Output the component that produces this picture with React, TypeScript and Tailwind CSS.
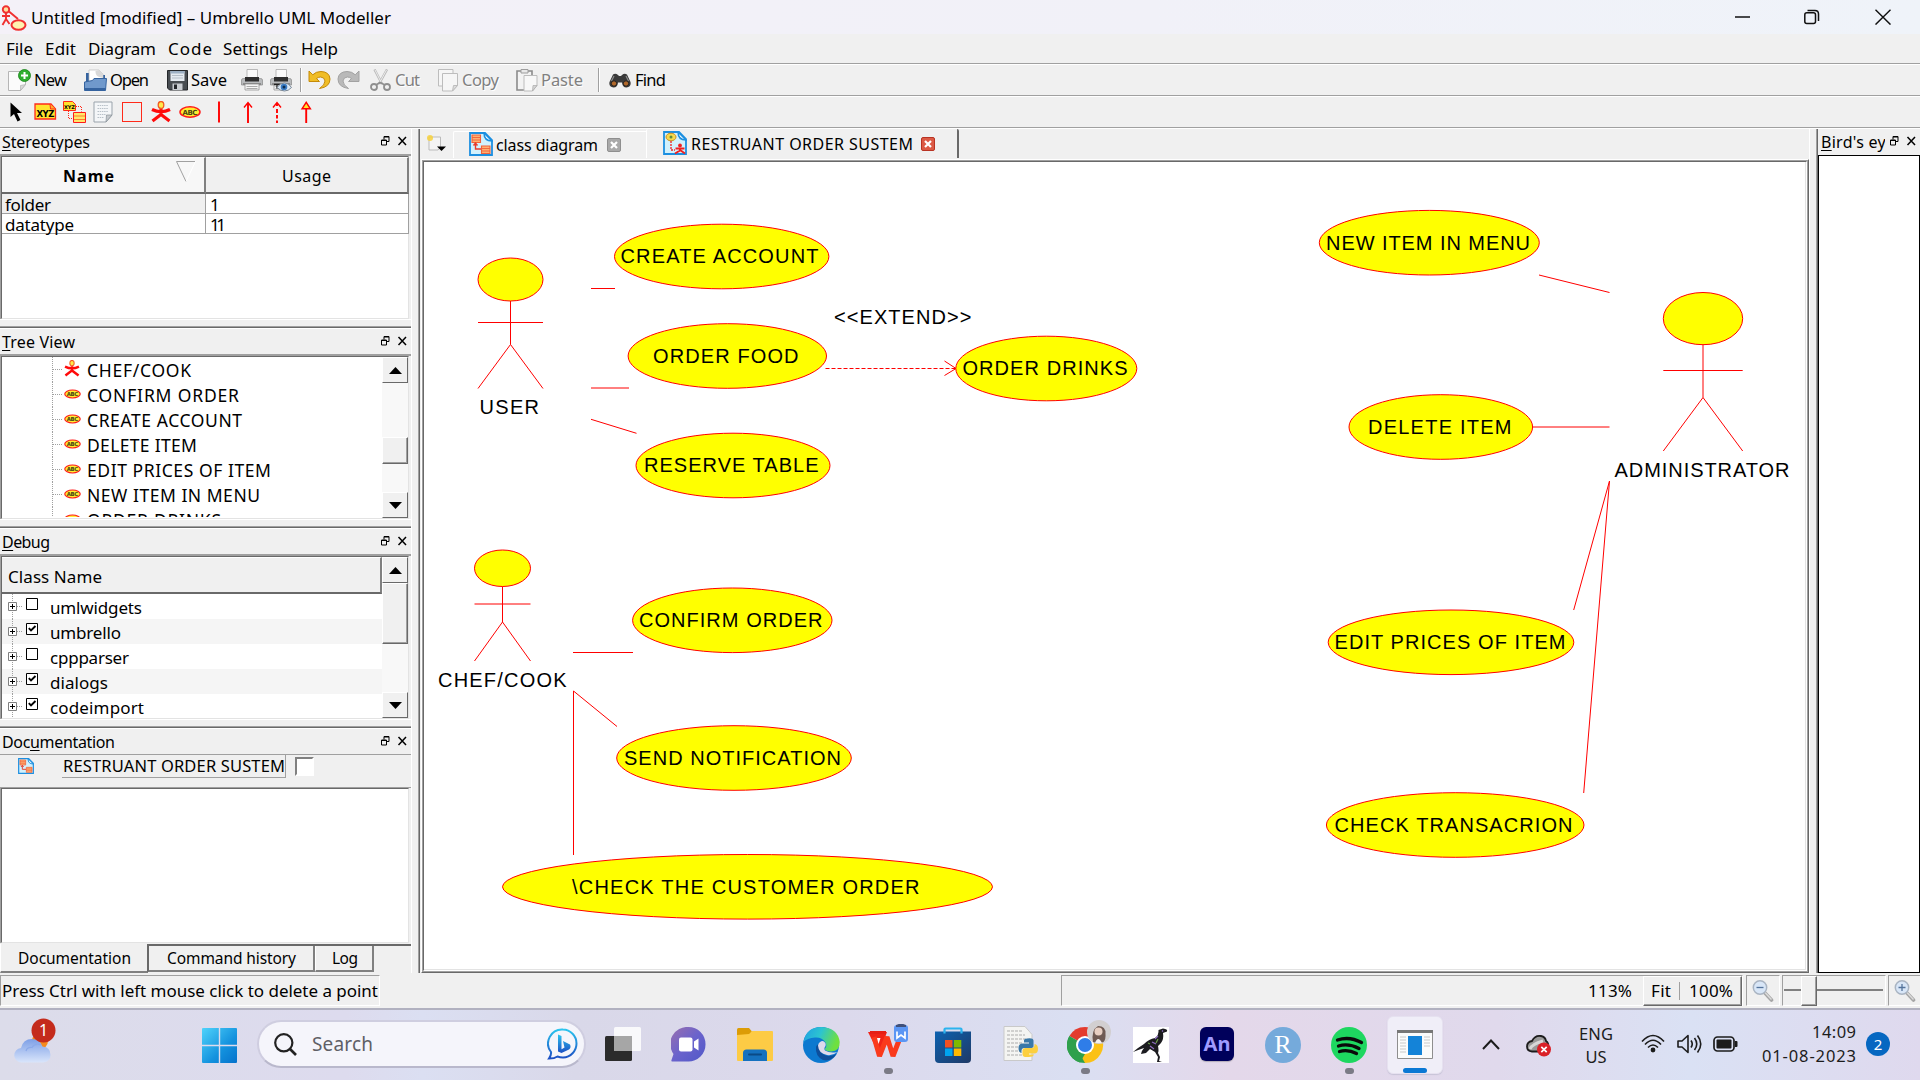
import { useLayoutEffect, useRef, useState } from "react";
import type { ReactNode } from "react";

/** Text label whose tracking is adjusted so that it fills a fixed width; `u` is the index of an underlined mnemonic. */
function T({ w, u, className = "", children }: { w: number; u?: number; className?: string; children: string }) {
  const ref = useRef<HTMLSpanElement>(null);
  const [ls, setLs] = useState(0);
  useLayoutEffect(() => {
    if (ref.current) {
      const natural = ref.current.getBoundingClientRect().width;
      setLs((w - natural) / Math.max(children.length - 1, 1));
    }
  }, [w, children]);
  return (
    <span className={"block shrink-0 whitespace-pre " + className} style={{ width: w }}>
      <span ref={ref} className="inline-block" style={{ letterSpacing: ls }}>
        {u === undefined ? (
          children
        ) : (
          <>
            {children.slice(0, u)}
            <span className="underline decoration-1 underline-offset-2">{children[u]}</span>
            {children.slice(u + 1)}
          </>
        )}
      </span>
    </span>
  );
}

/* ---------- small icons ---------- */

function AppLogo() {
  return (
    <svg className="h-[26px] w-[26px] shrink-0" viewBox="0 0 26 26" fill="none" stroke="#f03030" strokeWidth="1.9">
      <circle cx="5" cy="4.500" r="3.200" fill="#ffe0a0" />
      <path d="M5 8v6M1 11h8M5 14l-3.500 6M5 14l3.500 5M8 6.500l9 7.500" />
      <ellipse cx="17.500" cy="20" rx="7" ry="4.800" fill="#fff3b0" strokeWidth="2" />
    </svg>
  );
}

function PageNew() {
  return (
    <svg className="h-[23px] w-[23px] shrink-0" viewBox="0 0 23 23">
      <path d="M.5 2.500h17v13l-5 6H.5z" fill="#fbfbfb" stroke="#b5b5b5" />
      <path d="M17.500 15.500l-5 6v-5z" fill="#d8d8d8" stroke="#aaa" strokeWidth=".6" />
      <circle cx="16.500" cy="6.500" r="6" fill="#2fae2f" stroke="#138013" strokeWidth=".8" />
      <path d="M16.500 3v7M13 6.500h7" stroke="#fff" strokeWidth="2" />
    </svg>
  );
}

function FolderOpen() {
  return (
    <svg className="h-[23px] w-[23px] shrink-0" viewBox="0 0 23 23">
      <path d="M2 4h9l2 2h8v9H2z" fill="#35639f" />
      <path d="M5 1h10l4 4v10H5z" fill="#fff" stroke="#bbb" strokeWidth=".7" />
      <path d="M11.500 2c0 4 1.500 6 7.500 7V5l-4-4z" fill="#d9d9d9" />
      <path d="M.5 13l8-1.500L10 9.500h12.500l-1 12h-21z" fill="#7099cc" stroke="#35639f" />
      <path d="M1 20h20.500" stroke="#35639f" strokeWidth="2" />
    </svg>
  );
}

function Floppy() {
  return (
    <svg className="h-[21px] w-[21px] shrink-0" viewBox="0 0 21 21">
      <path d="M1 .5h19.500v19.500H2.500L.5 18V.5z" fill="#484d52" stroke="#24272a" />
      <path d="M3.500 1h14v10h-14z" fill="#e4eaf0" />
      <path d="M3.500 1h14v2.500h-14z" fill="#9db0c4" />
      <path d="M5 5.500h11M5 8h11" stroke="#b5bec8" />
      <path d="M5.500 13.500h10V20h-10z" fill="#c9cdd2" />
      <path d="M7 14.500h3V19H7z" fill="#22262a" />
    </svg>
  );
}

function Printer({ eye }: { eye?: boolean }) {
  return (
    <svg className="h-[23px] w-[22px] shrink-0" viewBox="0 0 22 23">
      <path d="M6 .5h10.500V11H6z" fill="#fafafa" stroke="#aaa" strokeWidth=".8" />
      <path d="M.5 11q0-1.500 2-1.500h17q2 0 2 1.500v5h-21z" fill="#b9bbbd" stroke="#888" strokeWidth=".7" />
      <path d="M4 8h14v4.500H4z" fill="#2f2f2f" />
      <path d="M2 14h18v2H2z" fill="#8a8a8a" />
      <path d="M4 15h14v6H4z" fill="#f5f5f5" stroke="#888" strokeWidth=".7" />
      <path d="M5.500 17.500h11M5.500 19.500h11" stroke="#aaa" />
      {eye && (
        <g>
          <path d="M4 15.500h6M7 15.500v4" stroke="#222" strokeWidth="1.300" />
          <path d="M7 18.500q3-4.500 7.500-4.500t7 4.500q-3 3.500-7 3.500t-7.500-3.500z" fill="#dbe8f5" stroke="#6f7d8a" strokeWidth=".9" />
          <circle cx="14" cy="18" r="3.300" fill="#3a7cc4" />
          <circle cx="14" cy="18" r="1.500" fill="#0e2d50" />
        </g>
      )}
    </svg>
  );
}

function Undo({ gray }: { gray?: boolean }) {
  return (
    <svg className={"h-[21px] w-[23px] shrink-0 " + (gray ? "-scale-x-100" : "")} viewBox="0 0 23 21">
      <path
        d="M1 1v10.500h10.500L8.500 8.500q2-1.500 4-1.500 4 0 4.500 4 0 4-5.500 7.500 10.500-1.500 10.500-9.500Q21.500 1.800 13 1.500q-5 0-8.200 3.300z"
        fill={gray ? "#b9b9b9" : "#f0bd25"}
        stroke={gray ? "#a2a2a2" : "#c48a08"}
        strokeWidth="1"
        strokeLinejoin="round"
      />
    </svg>
  );
}

function Scissors() {
  return (
    <svg className="h-[22px] w-[21px] shrink-0" viewBox="0 0 21 22" fill="none">
      <path d="M4.500.5L12 15M17 .5L9 15" stroke="#b8b8b8" strokeWidth="2.400" />
      <path d="M5 1l6 12M16.500 1L10 13" stroke="#f2f2f2" strokeWidth=".9" />
      <circle cx="4" cy="18" r="3" stroke="#8f8f8f" strokeWidth="1.800" />
      <circle cx="17" cy="18" r="3" stroke="#8f8f8f" strokeWidth="1.800" />
      <path d="M6 16l4-2.500 5 2.500" stroke="#8f8f8f" strokeWidth="1.800" />
    </svg>
  );
}

function CopyIcon() {
  return (
    <svg className="h-[23px] w-[20px] shrink-0" viewBox="0 0 20 23" stroke="#bdbdbd" fill="#f6f6f6">
      <path d="M.5.5h14.500v16.500H.5z" />
      <path d="M4.500 4.500h15v12l-5 5.500h-10z" />
      <path d="M19.500 16.500h-4l-1 5.500z" fill="#ddd" />
    </svg>
  );
}

function PasteIcon() {
  return (
    <svg className="h-[23px] w-[22px] shrink-0" viewBox="0 0 22 23">
      <path d="M1 2h15v19H1z" fill="#f3f3f3" stroke="#8b8b8b" strokeWidth="1.600" />
      <path d="M5 .5h7V4H5z" fill="#e9e9e9" stroke="#9d9d9d" />
      <path d="M8 6.500h13v10l-4.500 5.500H8z" fill="#f8f8f8" stroke="#bcbcbc" />
      <path d="M21 16.500h-4l-.5 5.500z" fill="#d5d5d5" stroke="#aaa" strokeWidth=".7" />
    </svg>
  );
}

function Binoculars() {
  return (
    <svg className="h-[15px] w-[22px] shrink-0" viewBox="0 0 22 15">
      <path d="M4 1.500Q6.500 0 9 2l1 1h2l1-1q2.500-2 5-.5l3.500 7.500q1 5-4 5.500-4 0-4.500-5h-4q-.5 5-4.500 5-5-.5-4-5.500z" fill="#3a3a3a" />
      <path d="M5 3l-2.500 5M17 3l2.500 5" stroke="#8d8d8d" strokeWidth="1.200" />
      <circle cx="5" cy="10.500" r="2.700" fill="#b1682a" stroke="#222" />
      <circle cx="17" cy="10.500" r="2.700" fill="#b1682a" stroke="#222" />
    </svg>
  );
}

function ActorIcon({ className }: { className: string }) {
  return (
    <svg className={"shrink-0 " + className} viewBox="0 0 20 22">
      <path d="M10 8v5.500L1.500 20M10 13.500L18.500 20M1 8.500q9 4.500 18 0" fill="none" stroke="#ff0a0a" strokeWidth="3.200" />
      <ellipse cx="10" cy="4" rx="2.800" ry="3.500" fill="#ffe94a" stroke="#f25a20" strokeWidth="1.300" />
    </svg>
  );
}

function AbcIcon({ className }: { className: string }) {
  return (
    <svg className={"shrink-0 " + className} viewBox="0 0 22 12">
      <ellipse cx="11" cy="6" rx="10" ry="5.200" fill="#ffee30" stroke="#ff1a1a" strokeWidth="1.500" />
      <text x="3.500" y="8.600" className="font-[DejaVu_Sans,sans-serif] text-[7px] font-bold" textLength="15" fill="#4a4412">
        ABC
      </text>
    </svg>
  );
}

function DiagramIcon({ useCase, className }: { useCase?: boolean; className: string }) {
  return (
    <svg className={"shrink-0 " + className} viewBox="0 0 24 24">
      <path d="M1 1h15l7 7v15H1z" fill="#d2f1fc" stroke="#1c8fe0" strokeWidth="1.800" />
      <path d="M15 1l8 8q-8 0-8-8z" fill="#fff" stroke="#1c8fe0" strokeWidth="1.500" />
      {useCase ? (
        <g>
          <ellipse cx="8" cy="6" rx="5" ry="3.800" fill="#f5d94c" stroke="#c98d20" />
          <circle cx="8" cy="6" r="1.500" fill="#5d8d3c" />
          <path d="M8 10v9h4" stroke="#f02020" strokeWidth="1.300" strokeDasharray="2 1" fill="none" />
          <path d="M17 17v2.500l-5 3M17 19l5 3.500M12.500 17.500h9" stroke="#f02020" strokeWidth="2" fill="none" />
          <circle cx="17" cy="14.500" r="1.900" fill="#f02020" />
        </g>
      ) : (
        <g>
          <path d="M3 3h8.500v7.500H3zM12.500 14H21v7.500h-8.500z" fill="#ffb070" stroke="#f0603a" strokeWidth="1.100" />
          <path d="M3 5.500h8.500M3 8h8.500M12.500 16.500H21M12.500 19H21" stroke="#f0603a" strokeWidth=".9" />
          <path d="M6.500 11v6h5.500M4.500 13.500l2-2.500 2 2.500" stroke="#e83a2a" strokeWidth="1.400" fill="none" />
        </g>
      )}
    </svg>
  );
}

function DockButtons() {
  return (
    <svg className="h-[10px] w-[26px] shrink-0" viewBox="0 0 26 10" fill="none" stroke="#000">
      <path d="M3 3.500V.5h5v5H6M3 1h5" />
      <path d="M.5 4h5v5h-5zM.5 4.500h5" />
      <path d="M17.500 1l7.500 8M25 1l-7.500 8" strokeWidth="1.500" />
    </svg>
  );
}

function TabClose({ red }: { red?: boolean }) {
  return (
    <svg className="h-[14px] w-[14px] shrink-0" viewBox="0 0 14 14">
      <rect x=".5" y=".5" width="13" height="13" rx="1.500" fill={red ? "#dc5a45" : "#a9a9a9"} stroke={red ? "#b83323" : "#8f8f8f"} />
      <path d="M4 4l6 6M10 4l-6 6" stroke="#fff" strokeWidth="2.200" />
    </svg>
  );
}

function Magnifier({ plus }: { plus?: boolean }) {
  return (
    <svg className="h-[22px] w-[22px] shrink-0" viewBox="0 0 22 22">
      <path d="M12.500 12.500l7 7.500" stroke="#a6a6a6" strokeWidth="3.600" strokeLinecap="round" />
      <path d="M13 12.500l6.500 7" stroke="#dcdcdc" strokeWidth="1.400" />
      <circle cx="8" cy="7.500" r="6.700" fill="#d8e6f7" stroke="#a9b4c2" strokeWidth="1.500" />
      <path d={plus ? "M4.500 7.500h7M8 4v7" : "M4.500 7.500h7"} stroke="#54749c" strokeWidth="1.300" />
    </svg>
  );
}

/* ---------- classic bevelled widgets ---------- */

function DockTitle({ children }: { children: ReactNode }) {
  return (
    <div className="flex h-[25px] shrink-0 items-center pl-[2px] pr-[4px] text-[16px]">
      {children}
      <div className="ml-auto pb-[2px]">
        <DockButtons />
      </div>
    </div>
  );
}

function DockSplit() {
  return (
    <div className="h-[10px] shrink-0 border-t border-t-white bg-[#f0f0f0] pt-[6px]">
      <div className="h-[3px] border-t border-b border-t-[#a0a0a0] border-b-white bg-[#696969]" />
    </div>
  );
}

function ScrollButton({ up, className = "" }: { up?: boolean; className?: string }) {
  return (
    <div className={"flex shrink-0 items-center justify-center border border-b-[#696969] border-l-white border-r-[#696969] border-t-white bg-[#f0f0f0] " + className}>
      <svg className="h-[7px] w-[13px]" viewBox="0 0 13 7">
        <path d={up ? "M0 7L6.500 0 13 7z" : "M0 0l6.500 7L13 0z"} />
      </svg>
    </div>
  );
}

function Thumb({ className }: { className: string }) {
  return <div className={"shrink-0 border border-b-[#696969] border-l-white border-r-[#696969] border-t-white bg-[#f0f0f0] shadow-[inset_-1px_-1px_0_#a0a0a0] " + className} />;
}

/* ---------- docks ---------- */

function Stereotypes() {
  return (
    <section className="flex h-[190px] shrink-0 flex-col">
      <DockTitle>
        <T w={88} u={0}>Stereotypes</T>
      </DockTitle>
      <div className="flex flex-1 flex-col border-l border-t-2 border-l-[#a0a0a0] border-t-[#a0a0a0] pr-[2px]">
        <div className="flex-1 border-b border-l border-r border-t border-b-[#e3e3e3] border-l-[#696969] border-r-[#e3e3e3] border-t-[#696969] bg-white">
          <div className="flex h-[37px] w-[407px] text-[16px]">
            <div className="flex w-[204px] items-center border-b-2 border-r-2 border-t border-b-[#696969] border-r-[#808080] border-t-white bg-[#f7f7f7] pl-[61px] pt-[2px]">
              <T w={51} className="font-bold">Name</T>
              <svg className="mb-[10px] ml-[62px] h-[21px] w-[20px]" viewBox="0 0 20 21" fill="none">
                <path d="M19 .5H.5l9.500 20" stroke="#a0a0a0" />
                <path d="M10 20.500l9.500-20" stroke="#fff" />
              </svg>
            </div>
            <div className="flex w-[203px] items-center border-b-2 border-r-2 border-t border-b-[#696969] border-r-[#808080] border-t-white bg-[#f0f0f0] pl-[76px] pt-[2px]">
              <T w={49}>Usage</T>
            </div>
          </div>
          {[
            ["folder", 46, "1", 8, "bg-[#f0f0f0]"],
            ["datatype", 69, "11", 16, "bg-white"],
          ].map(([name, w, n, nw, bg]) => (
            <div key={name as string} className="flex h-[20px] w-[407px] border-b border-r border-[#a0a0a0] text-[17px] leading-[19px]">
              <div className={"flex w-[204px] items-center border-r border-[#a0a0a0] pl-[3px] pt-px " + bg}>
                <T w={w as number}>{name as string}</T>
              </div>
              <div className="flex items-center pl-[4px] pt-px">
                <T w={nw as number}>{n as string}</T>
              </div>
            </div>
          ))}
        </div>
      </div>
    </section>
  );
}

const treeItems: [string, number][] = [
  ["CHEF/COOK", 104],
  ["CONFIRM ORDER", 152],
  ["CREATE ACCOUNT", 155],
  ["DELETE ITEM", 110],
  ["EDIT PRICES OF ITEM", 184],
  ["NEW ITEM IN MENU", 173],
  ["ORDER DRINKS", 134],
];

function TreeView() {
  return (
    <section className="flex h-[190px] shrink-0 flex-col">
      <DockTitle>
        <T w={73} u={0}>Tree View</T>
      </DockTitle>
      <div className="flex flex-1 flex-col overflow-hidden border-l border-t-2 border-l-[#a0a0a0] border-t-[#a0a0a0] pr-[2px]">
        <div className="flex h-[163px] border-b border-l border-r border-t border-b-[#e3e3e3] border-l-[#696969] border-r-[#e3e3e3] border-t-[#696969] bg-white">
          <div className="h-[160px] w-[381px] overflow-hidden">
            {treeItems.map(([name, w], i) => (
              <div key={name} className="flex h-[25px] pl-[50px] text-[17.5px]">
                <div className="h-[25px] w-px border-l border-dotted border-[#a0a0a0]" />
                <div className="mt-[12px] h-px w-[9px] border-t border-dotted border-[#a0a0a0]" />
                <div className="-ml-[3px] mr-[3px] flex w-[26px] justify-center pt-[3px]">
                  {i === 0 ? <ActorIcon className="h-[17px] w-[16px]" /> : <AbcIcon className="mt-[4px] h-[10px] w-[17px]" />}
                </div>
                <T w={w} className="-ml-px pt-px leading-[25px]">{name}</T>
              </div>
            ))}
          </div>
          <div className="flex w-[26px] flex-col bg-[#f8f8f8]">
            <ScrollButton up className="h-[26px]" />
            <Thumb className="mt-[54px] h-[27px]" />
            <ScrollButton className="mt-auto h-[26px]" />
          </div>
        </div>
      </div>
    </section>
  );
}

const debugItems: [string, number, boolean][] = [
  ["umlwidgets", 92, false],
  ["umbrello", 71, true],
  ["cppparser", 79, false],
  ["dialogs", 58, true],
  ["codeimport", 94, true],
];

function Debug() {
  return (
    <section className="flex h-[190px] shrink-0 flex-col">
      <DockTitle>
        <T w={48} u={0}>Debug</T>
      </DockTitle>
      <div className="flex flex-1 flex-col overflow-hidden border-l border-t-2 border-l-[#a0a0a0] border-t-[#a0a0a0] pr-[2px]">
        <div className="flex h-[163px] border-b border-l border-r border-t border-b-[#e3e3e3] border-l-[#696969] border-r-[#e3e3e3] border-t-[#696969] bg-white">
          <div className="h-[161px] w-[381px] overflow-hidden">
            <div className="flex h-[37px] items-center border-b-2 border-r-2 border-t border-b-[#696969] border-r-[#808080] border-t-white bg-[#f0f0f0] pl-[6px] pt-[3px] text-[17px]">
              <T w={94}>Class Name</T>
            </div>
            {debugItems.map(([name, w, on], i) => (
              <div key={name} className={"flex h-[25px] pl-[6px] text-[17px] " + (i % 2 ? "bg-[#f5f5f5]" : "bg-white")}>
                <svg className="h-[25px] w-[15px] shrink-0" viewBox="0 0 15 25" fill="none">
                  <path d="M4.500 0v25M9 12.500h6" stroke="#a0a0a0" strokeDasharray="1 1" />
                  <path d="M.5 8.500h8v8h-8z" fill="#fff" stroke="#808080" />
                  <path d="M2 12.500h5M4.500 10v5" stroke="#000" />
                </svg>
                <svg className="ml-[3px] mt-[4px] h-[12px] w-[12px] shrink-0" viewBox="0 0 12 12" fill="none" stroke="#000">
                  <path d="M.5.500h11v11H.5z" fill="#fff" />
                  {on && <path d="M2.800 5.200l2.200 2.300 4.500-4.500" strokeWidth="1.900" />}
                </svg>
                <T w={w} className="ml-[12px] pt-px leading-[25px]">{name}</T>
              </div>
            ))}
          </div>
          <div className="flex w-[26px] flex-col bg-[#f8f8f8]">
            <ScrollButton up className="h-[26px]" />
            <Thumb className="h-[61px]" />
            <ScrollButton className="mt-auto h-[26px]" />
          </div>
        </div>
      </div>
    </section>
  );
}

function Documentation() {
  return (
    <section className="flex min-h-0 flex-1 flex-col">
      <DockTitle>
        <T w={113} u={3}>Documentation</T>
      </DockTitle>
      <div className="flex h-[33px] shrink-0 items-start border-t border-[#a0a0a0]">
        <DiagramIcon className="ml-[18px] mt-[3px] h-[16px] w-[16px]" />
        <div className="ml-[28px] flex h-[23px] w-[224px] items-center border-b border-r border-[#a0a0a0] pl-px pt-px text-[16.5px]">
          <T w={222}>RESTRUANT ORDER SUSTEM</T>
        </div>
        <div className="ml-[9px] mt-[2px] h-[19px] w-[19px] border-2 border-b-white border-l-[#808080] border-r-white border-t-[#808080] bg-white" />
      </div>
      <div className="h-[156px] shrink-0 border-l border-t border-[#a0a0a0] pr-[2px]">
        <div className="h-full border-b border-l border-r border-t border-b-[#e3e3e3] border-l-[#696969] border-r-[#e3e3e3] border-t-[#696969] bg-white" />
      </div>
      <div className="flex h-[30px] items-start pt-px text-[15.5px]">
        <div className="flex h-[29px] w-[148px] items-center border-b-2 border-l border-r border-b-[#808080] border-l-white border-r-[#696969] pl-[17px] pt-[3px]">
          <T w={113}>Documentation</T>
        </div>
        <div className="flex h-[28px] flex-1 items-start border-t-2 border-[#696969]">
          <div className="flex h-[26px] w-[167px] items-center border-b-2 border-l border-r-2 border-b-[#808080] border-l-[#696969] border-r-[#808080] pl-[18px] pt-[2px]">
            <T w={129}>Command history</T>
          </div>
          <div className="flex h-[26px] w-[59px] items-center border-b-2 border-l border-r-2 border-b-[#808080] border-l-white border-r-[#808080] pl-[16px] pt-[2px]">
            <T w={26}>Log</T>
          </div>
        </div>
      </div>
    </section>
  );
}

/* ---------- use case diagram ---------- */

type UseCase = [string, number, number, number, number, number];
// label, centre x, centre y, rx, text left, text right
const useCases: UseCase[] = [
  ["CREATE ACCOUNT", 721.7, 256.5, 107.2, 621, 819],
  ["ORDER FOOD", 727.3, 356, 99.2, 653.5, 799],
  ["ORDER DRINKS", 1046.3, 368.5, 90.5, 963, 1128],
  ["RESERVE TABLE", 733, 465.5, 97, 644.5, 819],
  ["CONFIRM ORDER", 732.3, 620.3, 99.7, 639.5, 823],
  ["SEND NOTIFICATION", 734, 758, 117.3, 624.5, 841.5],
  ["\\CHECK THE CUSTOMER ORDER", 747.5, 886.8, 245, 572.5, 920],
  ["NEW ITEM IN MENU", 1429.3, 242.7, 110, 1326.5, 1530.5],
  ["DELETE ITEM", 1440.800, 427, 91.800, 1368.500, 1512],
  ["EDIT PRICES OF ITEM", 1451, 642.3, 122.800, 1335, 1566],
  ["CHECK TRANSACRION", 1455.200, 825, 128.800, 1335, 1573],
];

interface Actor {
  name: string;
  x: number;
  rx: number;
  top: number;
  neck: number;
  arms: number;
  hip: number;
  feet: number;
  left: number;
  right: number;
  base: number;
}
const actors: Actor[] = [
  { name: "USER", x: 510.5, rx: 32.5, top: 258, neck: 301, arms: 322.5, hip: 344.5, feet: 388.5, left: 480, right: 539.5, base: 413.5 },
  { name: "CHEF/COOK", x: 502.5, rx: 28, top: 550, neck: 586.5, arms: 604, hip: 622, feet: 661, left: 438.5, right: 567, base: 686.5 },
  { name: "ADMINISTRATOR", x: 1703, rx: 39.7, top: 292.5, neck: 344.7, arms: 370.5, hip: 397.5, feet: 451, left: 1615, right: 1790, base: 477 },
];

function DiagramCanvas() {
  return (
    <svg className="block h-[807px] w-[1381px]" viewBox="424 162 1381 807">
      <g stroke="#ff0000" strokeWidth="1" fill="none">
        <path d="M591 288.500H615M591 388H629M591 419.300L636.500 433.300M573 652.500H633M573.500 691L617 726.500M573.500 691V855" />
        <path d="M1539 275L1609.500 292.500M1532.500 427H1609.500M1609.500 481L1573.700 610M1609.500 481L1583.700 793" />
        <path d="M825.500 368.500H956" strokeDasharray="4 2" />
        <path d="M944.500 361L956 368.500L944.500 375.500" />
        {actors.map((a) => (
          <g key={a.name}>
            <ellipse cx={a.x} cy={(a.top + a.neck) / 2} rx={a.rx} ry={(a.neck - a.top) / 2} fill="#ffff00" />
            <path d={`M${a.x} ${a.neck}V${a.hip}M${a.x - a.rx} ${a.arms}H${a.x + a.rx}M${a.x - a.rx} ${a.feet}L${a.x} ${a.hip}L${a.x + a.rx} ${a.feet}`} />
          </g>
        ))}
        {useCases.map(([name, cx, cy, rx]) => (
          <ellipse key={name} cx={cx} cy={cy} rx={rx} ry="32.300" fill="#ffff00" />
        ))}
      </g>
      <g className="font-[Liberation_Sans,Arial,sans-serif] text-[20px]" fill="#000">
        {useCases.map(([name, , cy, , l, r]) => (
          <text key={name} x={l - 0.5} y={cy + 6.800} textLength={r - l}>{name}</text>
        ))}
        {actors.map((a) => (
          <text key={a.name} x={a.left - 0.5} y={a.base} textLength={a.right - a.left}>{a.name}</text>
        ))}
        <text x="834" y="323.500" textLength="137.500">{"<<EXTEND>>"}</text>
      </g>
    </svg>
  );
}

function Editor() {
  return (
    <main className="flex h-[844px] w-[1391px] shrink-0 flex-col border-l border-l-[#a0a0a0]">
      <div className="flex h-full flex-col border-l border-l-[#696969]">
        <div className="flex h-[30px] shrink-0 items-start text-[16px]">
          <svg className="ml-[6px] mt-[5px] h-[20px] w-[21px]" viewBox="0 0 21 20">
            <path d="M3 3h11.500v10l-2.500 3H3z" fill="#f4f4f4" stroke="#bbb" />
            <circle cx="4" cy="4" r="3" fill="#f7d13c" opacity=".85" />
            <path d="M11 12.500h9L15.500 17z" fill="#000" />
          </svg>
          <div className="ml-[6px] mt-[2px] flex h-[27px] w-[193px] items-center rounded-tl-[2px] border-l border-t border-white pl-[15px]">
            <DiagramIcon className="mb-[2px] h-[24px] w-[24px]" />
            <T w={102} className="ml-[3px]">class diagram</T>
            <div className="ml-[9px]"><TabClose /></div>
          </div>
          <div className="flex h-[29px] w-[313px] items-center rounded-t-[2px] border-l border-r-2 border-l-white border-r-[#696969] pl-[16px]">
            <DiagramIcon useCase className="mb-[2px] h-[24px] w-[24px]" />
            <T w={222} className="ml-[4px]">RESTRUANT ORDER SUSTEM</T>
            <div className="ml-[8px]"><TabClose red /></div>
          </div>
        </div>
        <div className="ml-px flex-1 border-b border-l border-r border-t border-b-[#696969] border-l-white border-r-[#696969] border-t-white">
          <div className="h-full border-b border-l border-r border-t border-[#a0a0a0]">
            <div className="h-full border-b border-l border-r border-t border-b-white border-l-[#696969] border-r-white border-t-[#696969] bg-[#f0f0f0]">
              <div className="h-full border-b border-r border-[#e3e3e3] bg-white">
                <DiagramCanvas />
              </div>
            </div>
          </div>
        </div>
      </div>
    </main>
  );
}

function BirdsEye() {
  return (
    <aside className="flex h-[844px] w-[104px] shrink-0 flex-col border-l border-l-[#a0a0a0]">
      <div className="flex h-full flex-col border-l border-l-[#696969]">
        <div className="flex h-[25px] items-center pl-[3px] pr-[4px] text-[16px]">
          <div className="w-[64px] overflow-hidden">
            <T w={74} u={0}>Bird's eye</T>
          </div>
          <div className="ml-auto pb-[2px]"><DockButtons /></div>
        </div>
        <div className="mt-px flex-1 border border-black bg-white" />
      </div>
    </aside>
  );
}

/* ---------- bars ---------- */

function MenuBar() {
  return (
    <nav className="flex h-[30px] items-center border-b border-[#a0a0a0] pl-[6px] pt-px text-[17px]">
      <T w={27}>File</T>
      <T w={31} className="ml-[12px]">Edit</T>
      <T w={68} className="ml-[12px]">Diagram</T>
      <T w={44} className="ml-[12px]">Code</T>
      <T w={65} className="ml-[11px]">Settings</T>
      <T w={37} className="ml-[13px]">Help</T>
    </nav>
  );
}

function MainToolbar() {
  return (
    <div className="flex h-[32px] items-center border-b border-t border-b-[#a0a0a0] border-t-white pl-[8px] text-[16.5px]">
      <PageNew />
      <T w={33} className="ml-[3px]">New</T>
      <div className="ml-[17px]"><FolderOpen /></div>
      <T w={39} className="ml-[3px]">Open</T>
      <div className="ml-[18px]"><Floppy /></div>
      <T w={36} className="ml-[3px]">Save</T>
      <div className="ml-[14px]"><Printer /></div>
      <div className="ml-[7px]"><Printer eye /></div>
      <div className="ml-[8px] h-[24px] w-[2px] border-l border-r border-l-[#a0a0a0] border-r-white" />
      <div className="ml-[6px]"><Undo /></div>
      <div className="ml-[6px]"><Undo gray /></div>
      <div className="ml-[10px]"><Scissors /></div>
      <div className="flex items-center text-[#808080] [text-shadow:1px_1px_0_#fff]">
        <T w={25} className="ml-[4px]">Cut</T>
        <div className="ml-[18px]"><CopyIcon /></div>
        <T w={37} className="ml-[4px]">Copy</T>
        <div className="ml-[17px]"><PasteIcon /></div>
        <T w={42} className="ml-[3px]">Paste</T>
      </div>
      <div className="ml-[15px] h-[24px] w-[2px] border-l border-r border-l-[#a0a0a0] border-r-white" />
      <div className="ml-[9px]"><Binoculars /></div>
      <T w={31} className="ml-[4px]">Find</T>
    </div>
  );
}

function DiagramToolbar() {
  return (
    <div className="flex h-[32px] items-center border-b border-t border-b-[#a0a0a0] border-t-white">
      <svg className="ml-[10px] h-[20px] w-[13px]" viewBox="0 0 13 20">
        <path d="M.5.500v14.500l3.500-3 3.500 7.500 3-1.500L7 11h5z" fill="#000" />
      </svg>
      <svg className="mb-[2px] ml-[11px] h-[17px] w-[23px]" viewBox="0 0 23 17">
        <path d="M1 1h16l4.500 5v10H1z" fill="#ffe32e" stroke="#ff2a1a" strokeWidth="1.300" />
        <path d="M16 1l.5 5h5" fill="#ffb02a" stroke="#ff2a1a" />
        <text x="2.500" y="14" textLength="18" className="font-[DejaVu_Sans,sans-serif] text-[8.5px] font-bold">XYZ</text>
      </svg>
      <svg className="ml-[6px] h-[22px] w-[23px]" viewBox="0 0 23 22">
        <path d="M.5.500h9l3 3v6H.5z" fill="#ffe32e" stroke="#ff2a1a" />
        <text x="1" y="8" textLength="11" className="font-[DejaVu_Sans,sans-serif] text-[5px] font-bold">XYZ</text>
        <path d="M13 5.500h5.500v5M5.500 10v7.500h5" fill="none" stroke="#ff2a1a" strokeDasharray="1 1" />
        <path d="M10.500 11.500h12v10h-12z" fill="#ffe76a" stroke="#ff1a1a" />
        <path d="M11 15h11M11 18.500h11" stroke="#ff7a2a" />
      </svg>
      <svg className="ml-[7px] h-[22px] w-[20px]" viewBox="0 0 20 22">
        <path d="M1 1h18v13l-6 7H1z" fill="#f4f6f8" stroke="#9aa3ab" />
        <path d="M4.500 4.500h11M4.500 7.500h11M4.500 10.500h11M4.500 13.500h8M4.500 16.500h6" stroke="#b8c0c8" strokeDasharray="1.500 .7" />
        <path d="M19 14h-5.500L13 21z" fill="#c5c9cd" stroke="#8a9299" strokeWidth=".7" />
      </svg>
      <div className="ml-[9px] h-[20px] w-[20px] border border-[#ff2a1a]" />
      <ActorIcon className="ml-[9px] h-[22px] w-[20px]" />
      <AbcIcon className="ml-[8px] h-[12px] w-[22px]" />
      <svg className="ml-[14px] h-[22px] w-[100px]" viewBox="215 0 100 22" fill="none" stroke="#ff0000" strokeWidth="1.900">
        <path d="M219 .5v21M248 2v20M277 2v3M277 8v4M277 14v3.500M277 19.500V22M306.200 8v14" />
        <path d="M244 6.500l4-5 4 5M273 6.500l4-5 4 5" strokeWidth="1.400" />
        <path d="M302 7.800l4.200-6.500 4.200 6.500z" fill="#ffe72a" strokeWidth="1.400" />
      </svg>
    </div>
  );
}

function StatusBar() {
  return (
    <footer className="flex h-[35px] items-start pt-[2px] text-[17px]">
      <div className="flex h-[31px] w-[380px] items-center border border-b-white border-l-[#a0a0a0] border-r-white border-t-[#a0a0a0] pl-px pt-px">
        <T w={376}>Press Ctrl with left mouse click to delete a point</T>
      </div>
      <div className="ml-[681px] flex h-[31px] w-[682px] items-center border border-b-white border-l-[#a0a0a0] border-r-white border-t-[#a0a0a0] pl-[526px]">
        <T w={44} className="pt-px">113%</T>
        <div className="ml-[11px] flex h-[30px] w-[99px] items-center border border-b-[#696969] border-l-white border-r-[#696969] border-t-white pl-[7px] pt-px shadow-[inset_-1px_-1px_0_#a0a0a0]">
          <T w={20}>Fit</T>
          <div className="ml-[8px] h-[18px] w-px bg-[#a0a0a0]" />
          <T w={44} className="ml-[9px]">100%</T>
        </div>
      </div>
      <div className="ml-[3px] flex h-[31px] w-[34px] items-center border border-b-white border-l-[#a0a0a0] border-r-white border-t-[#a0a0a0] pl-[5px]">
        <Magnifier />
      </div>
      <div className="ml-[2px] flex h-[31px] w-[104px] items-center border border-b-white border-l-[#a0a0a0] border-r-white border-t-[#a0a0a0] pl-px">
        <div className="h-[3px] w-[17px] border-t-2 border-[#808080]" />
        <Thumb className="h-[30px] w-[16px]" />
        <div className="h-[3px] w-[66px] border-t-2 border-[#808080]" />
      </div>
      <div className="ml-[2px] flex h-[31px] w-[32px] items-center border border-b-white border-l-[#a0a0a0] border-r-0 border-t-[#a0a0a0] pl-[5px]">
        <Magnifier plus />
      </div>
    </footer>
  );
}

/* ---------- taskbar ---------- */

function Slot({ className, children, dot }: { className: string; children: ReactNode; dot?: boolean }) {
  return (
    <div className={"flex h-[70px] shrink-0 flex-col items-center justify-end " + className}>
      {children}
      <div className={"mb-[6px] mt-[5px] h-[6px] w-[9px] rounded-full " + (dot ? "bg-[#7b7b86]" : "")} />
    </div>
  );
}

function Taskbar() {
  return (
    <div className="flex h-[72px] items-start border-t-2 border-[#b1b1c0] bg-[linear-gradient(90deg,#dcdcea_0%,#dddbee_18%,#dbdff2_22%,#d9d8e9_30%,#dcd9ec_44%,#dadff2_56%,#e4d8ea_64%,#e0d9ec_78%,#dae1f4_88%,#dfd9ee_100%)] font-[Noto_Sans,Open_Sans,sans-serif] text-[#1c1c1c]">
      <Slot className="ml-[12px] mr-[2px] w-[44px]">
        <svg className="-mb-px h-[48px] w-[44px]" viewBox="0 0 44 48">
          <defs>
            <linearGradient id="cloud" x1="0" y1="0" x2="0" y2="1">
              <stop offset="0" stopColor="#7d9fe6" />
              <stop offset="1" stopColor="#d9e5fb" />
            </linearGradient>
          </defs>
          <circle cx="28" cy="25" r="8" fill="#f58a1e" />
          <path d="M10 46.500a7 7 0 01-1-14.500q2-9 11-9 8 0 10.500 7.500 8 .5 8 8.500 0 7-7.500 7.500z" fill="url(#cloud)" />
          <path d="M14 35q1-4 6-3.500 3-5 9-2.500" fill="none" stroke="#8ba9ea" strokeWidth="1.200" />
          <circle cx="31.500" cy="14.500" r="12" fill="#c42b1c" />
          <text x="31.500" y="20" textAnchor="middle" className="text-[16px]" fill="#fff">1</text>
        </svg>
      </Slot>
      <Slot className="ml-[144px] w-[35px]">
        <svg className="h-[35px] w-[35px]" viewBox="0 0 35 35">
          <defs>
            <linearGradient id="win" x1="0" y1="0" x2="1" y2="1">
              <stop offset="0" stopColor="#4fd3fb" />
              <stop offset=".6" stopColor="#1492de" />
              <stop offset="1" stopColor="#0672cb" />
            </linearGradient>
          </defs>
          <path d="M1 0h15.800v16.800H0V1q0-1 1-1zM18.200 0H34q1 0 1 1v15.800H18.200zM0 18.200h16.800V35H1q-1 0-1-1zM18.200 18.200H35V34q0 1-1 1H18.200z" fill="url(#win)" />
        </svg>
      </Slot>
      <div className="ml-[20px] mt-[10px] flex h-[48px] w-[329px] items-center rounded-full border-2 border-b-[#b9b8cc] border-l-[#cfcde0] border-r-[#cfcde0] border-t-[#cfcee0] bg-[#f5f5fb] pl-[15px]">
        <svg className="h-[23px] w-[23px]" viewBox="0 0 23 23" fill="none" stroke="#222">
          <circle cx="9.800" cy="9.800" r="8.600" strokeWidth="2.200" />
          <path d="M16 16l6 6" strokeWidth="2.700" />
        </svg>
        <T w={61} className="ml-[15px] pt-px text-[19px] text-[#5f5f66]">Search</T>
        <svg className="ml-auto mr-[6px] h-[32px] w-[31px]" viewBox="0 0 31 32" fill="none">
          <defs>
            <linearGradient id="bing" x1="0" y1="0" x2="0" y2="1">
              <stop offset="0" stopColor="#2cc4ee" />
              <stop offset="1" stopColor="#1c4fc4" />
            </linearGradient>
          </defs>
          <path d="M16 1.500A14 14 0 0129.500 15.500 14 14 0 0116 29.500q-3 0-5.500-1-3 2-8.500 2 2.500-3.500 2-6.500A14 14 0 0116 1.500z" stroke="url(#bing)" strokeWidth="2" />
          <path d="M11 6.500l3.500 1.500v13.500l-3.500 2zM16 13l7 3.500q1.500 3-1 5L14.500 25l-3.500-1.500 6.500-4z" fill="url(#bing)" />
        </svg>
      </div>
      <Slot className="ml-[19px] w-[36px]">
        <svg className="mb-[2px] h-[34px] w-[36px]" viewBox="0 0 36 34">
          <rect x="0" y="9" width="27" height="25" rx="1.500" fill="#2b2b2b" />
          <rect x="9" y="0" width="27" height="24" rx="1.500" fill="#fdfdfd" opacity=".88" />
          <path d="M9 9h18v15H9z" fill="#a6a6a6" />
        </svg>
      </Slot>
      <Slot className="ml-[30px] w-[35px]">
        <svg className="mb-px h-[35px] w-[35px]" viewBox="0 0 35 35">
          <defs>
            <linearGradient id="chat" x1="0" y1="0" x2="1" y2="1">
              <stop offset="0" stopColor="#9a6fae" />
              <stop offset=".5" stopColor="#6a63cc" />
              <stop offset="1" stopColor="#5058c8" />
            </linearGradient>
          </defs>
          <path d="M17.500 0A17 17 0 0134.500 17 17 17 0 0117 34.500H1q-1 0-.5-1.500l2-6A17 17 0 0117.500 0z" fill="url(#chat)" />
          <rect x="8" y="10.500" width="13.500" height="14" rx="2" fill="#fff" />
          <path d="M23 14.500l4.500-3v12l-4.500-3z" fill="#fff" />
        </svg>
      </Slot>
      <Slot className="ml-[31px] w-[36px]">
        <svg className="mb-[2px] h-[33px] w-[36px]" viewBox="0 0 36 33">
          <path d="M0 1.500Q0 0 1.500 0H12l3 3.500V10H0z" fill="#dc9c06" />
          <path d="M0 7l12-1 3-3h20q1 0 1 1v28q0 1-1 1H1q-1 0-1-1z" fill="#fdcb45" />
          <path d="M6 33v-8q0-3.500 3.500-3.500h17Q30 21.500 30 25v8z" fill="#1571bf" />
          <path d="M12 26.500h12" stroke="#0b4a86" strokeWidth="2" strokeLinecap="round" />
        </svg>
      </Slot>
      <Slot className="ml-[30px] w-[37px]">
        <svg className="h-[36px] w-[37px]" viewBox="0 0 37 36">
          <defs>
            <linearGradient id="edge" x1="0" y1="0" x2="1" y2=".3">
              <stop offset="0" stopColor="#1f9fe4" />
              <stop offset=".5" stopColor="#2cc4d0" />
              <stop offset="1" stopColor="#6fe03f" />
            </linearGradient>
          </defs>
          <circle cx="18" cy="18" r="18" fill="#0c79d0" />
          <path d="M13 20q-1 9 7 13 8 2 13.500-6-8 4-13.500 0-5-4-1.500-10-5 0-5.500 3z" fill="#0d4f9c" />
          <path d="M.5 15Q3 0 18.500 0 35 1 36.700 15q.3 9-8.500 9.500-5.500-.5-6.700-2.500 3-2.500 1-6.500Q19 10 12 10.500 4 11 .5 15z" fill="url(#edge)" />
          <path d="M15 18.500q1-4.500 5-4.500 3.500 1.500 2.500 5-2 2.500-.5 4.500 5 3 12.500 1.500-5 4-10.500 3-8.500-1.500-9-9.500z" fill="#dddaec" />
        </svg>
      </Slot>
      <Slot className="ml-[29px] w-[38px]" dot>
        <svg className="mb-[3px] h-[36px] w-[40px] shrink-0" viewBox="0 0 40 36">
          <path d="M0 8h19l-8 22z" fill="#f02418" />
          <path d="M6 13l5.500 19L19 13l6 19L33.500 10" fill="none" stroke="#fa3a1c" strokeWidth="5" strokeLinejoin="bevel" />
          <path d="M2 8.500h16" stroke="#e61f16" strokeWidth="3" />
          <path d="M9 14h3.500l-2 6z" fill="#fff" />
          <rect x="26" y="1" width="14" height="17" rx="3" fill="#5b96f4" />
          <path d="M28 1q5-2.500 10 0v2H28z" fill="#40507a" />
          <path d="M29 7.500v6.500l4-3 4 3V7.500" fill="none" stroke="#fff" strokeWidth="1.700" />
        </svg>
      </Slot>
      <Slot className="ml-[28px] w-[36px]">
        <svg className="h-[36px] w-[36px]" viewBox="0 0 36 36">
          <defs>
            <linearGradient id="store" x1="0" y1="0" x2="1" y2="1">
              <stop offset="0" stopColor="#0c62b0" />
              <stop offset="1" stopColor="#1f3966" />
            </linearGradient>
          </defs>
          <path d="M0 4.500h36V32q0 4-4 4H4q-4 0-4-4z" fill="url(#store)" />
          <path d="M9.500 6.500V2.500q0-1 1-1h15q1 0 1 1v4" fill="none" stroke="#2bb3ee" strokeWidth="2.200" />
          <path d="M10 13h7.500v7.500H10z" fill="#f25022" />
          <path d="M18.800 13h7.500v7.500h-7.500z" fill="#7fba00" />
          <path d="M10 21.500h7.500V29H10z" fill="#00a4ef" />
          <path d="M18.800 21.500h7.500V29h-7.500z" fill="#ffb900" />
        </svg>
      </Slot>
      <Slot className="ml-[32px] w-[35px]">
        <svg className="mb-[2px] h-[35px] w-[35px]" viewBox="0 0 35 35">
          <path d="M1 .5h21l7 8V34.500H1z" fill="#f4f4f2" stroke="#c9c9c9" />
          <path d="M4 5h15M4 9h18M4 13h20M4 17h16M4 21h12M4 25h14M4 29h20" stroke="#c3c3c3" strokeWidth="1.600" strokeDasharray="3 1" />
          <path d="M24 12.500q6-1 6.500 2V20q0 2-3 2h-6q-3 0-3 3v2q-3-.5-3-5t4-4.500h6.500v-1H21V14q.5-1.500 3-1.500z" fill="#3a78a8" />
          <path d="M25.500 31q-6 .5-6-2.500v-4q0-2.500 3-2.500h6q3 0 3-3v-1q3.500.5 3.500 5t-4 4.500h-5v1h5q-.5 2.500-5.500 2.500z" fill="#fccf3f" />
        </svg>
      </Slot>
      <Slot className="ml-[29px] w-[36px]" dot>
        <svg className="-mb-px -mr-[10px] h-[44px] w-[46px] shrink-0" viewBox="0 0 46 44">
          <path d="M18 25L2.400 16A18 18 0 0133.600 16z" fill="#e33b2e" />
          <path d="M18 25L33.600 16A18 18 0 0118 43z" fill="#fbc116" />
          <path d="M18 25V43A18 18 0 012.400 16z" fill="#2fa04c" />
          <path d="M18 25l-7.500 4.500L18 43l8-13z" fill="#fbc116" />
          <path d="M2.400 16L11 30l7 4-5 8.500A18 18 0 012.400 16z" fill="#2fa04c" />
          <circle cx="18" cy="25" r="9" fill="#fff" />
          <circle cx="18" cy="25" r="7" fill="#2f7de8" />
          <circle cx="32" cy="12" r="12" fill="#d2cfd0" />
          <path d="M26 22q-2-12 5-16 8 0 7.500 8 .5 5-2 8-5 2-10.500 0z" fill="#6f5a52" />
          <circle cx="31.500" cy="11.500" r="4" fill="#e8cfc2" />
          <path d="M28 23q3-8 7 0z" fill="#f2efef" />
        </svg>
      </Slot>
      <Slot className="ml-[30px] w-[36px]">
        <svg className="h-[36px] w-[36px] bg-white" viewBox="0 0 36 36">
          <path d="M30 1.500q5 .5 4 3l-4 1.500q1 6-2 10l-3 3q1 5 0 7l2 4-1 4 3 1h-5l1-5-3-5-5-3-4 4-5 1q1-4 3-6-6 2-11 4 6-5 11-8 5-5 11-6 4-3 3.500-8z" fill="#1c1c20" />
          <path d="M22 12l3-3M19 15l4 2M17 19l4 3M29 4.500l1-1" stroke="#8f6fc0" strokeWidth="1.200" />
          <path d="M25 12l-2 4M15 16l2 1" stroke="#6ea04c" strokeWidth="1.200" />
        </svg>
      </Slot>
      <Slot className="ml-[31px] w-[34px]">
        <div className="mb-[2px] flex h-[34px] w-[34px] items-center justify-center rounded-[6px] bg-[#00005b] shadow-[0_1px_1px_#5555]">
          <T w={27} className="font-[Noto_Sans,sans-serif] text-[20px] font-bold leading-[34px] text-[#9f9bff]">An</T>
        </div>
      </Slot>
      <Slot className="ml-[31px] w-[36px]">
        <div className="flex h-[36px] w-[36px] items-center justify-center rounded-full bg-[#75aadb]">
          <span className="font-[Liberation_Serif,serif] text-[26px] leading-none text-white">R</span>
        </div>
      </Slot>
      <Slot className="ml-[30px] w-[36px]" dot>
        <svg className="h-[36px] w-[36px]" viewBox="0 0 36 36">
          <circle cx="18" cy="18" r="18" fill="#1ed760" />
          <path d="M6.500 13q12-4 24 2.500M7.500 19q10-3 20.500 2.500M8.500 24.500q8.500-2.500 17 2" fill="none" stroke="#0a0a0a" strokeLinecap="round" strokeWidth="3.300" />
        </svg>
      </Slot>
      <div className="ml-[20px] mt-[6px] flex h-[58px] w-[56px] flex-col items-center rounded-[6px] border border-[#e6e1f0] bg-[#f0eef8] pt-[13px] shadow-[0_1px_1px_#c8c4d8]">
        <svg className="h-[29px] w-[36px] shrink-0" viewBox="0 0 36 29">
          <path d="M.5.500h35v28H.5z" fill="#fbfbfb" stroke="#8e8e8e" />
          <path d="M0 0h36v3H0z" fill="#777" />
          <path d="M3 7h6M3 10h6M3 13h6M3 16h6M3 19h6M3 22h6M27 7h6M27 10h6M27 13h6M27 16h6" stroke="#c9c9c9" />
          <path d="M11 6h14v19H11z" fill="#1483d8" />
        </svg>
        <div className="mt-[9px] h-[5px] w-[24px] shrink-0 rounded-full bg-[#0b78d4]" />
      </div>
      <svg className="ml-[39px] mt-[29px] h-[11px] w-[18px]" viewBox="0 0 18 11" fill="none" stroke="#1c1c1c" strokeWidth="2">
        <path d="M1 10l8-8.500L17 10" />
      </svg>
      <svg className="ml-[26px] mt-[24px] h-[23px] w-[26px]" viewBox="0 0 26 23">
        <path d="M6 17.500q-5-.5-5-5t5-5.500q3-6 9-5 4.500 1 5 5 3 2 2 6t-5 4.500z" fill="#9a9a9a" stroke="#1c1c1c" strokeWidth="1.800" />
        <path d="M4 15q2-5 13-8" stroke="#d8d8d8" strokeWidth="3" fill="none" />
        <circle cx="18" cy="15.500" r="7" fill="#da2128" />
        <path d="M15.300 12.800l5.400 5.400M20.700 12.800l-5.400 5.400" stroke="#fff" strokeWidth="1.700" />
      </svg>
      <div className="ml-[27px] mt-[12px] flex h-[46px] w-[34px] flex-col items-center text-[16.500px]">
        <T w={34} className="leading-[23px]">ENG</T>
        <T w={21} className="leading-[23px]">US</T>
      </div>
      <svg className="ml-[28px] mt-[24px] h-[20px] w-[24px]" viewBox="0 0 24 20" fill="none" stroke="#1c1c1c" strokeWidth="1.600">
        <path d="M1 7.500q11-12 22 0M4 10.500q8-8.500 16 0M7 13.500q5-5 10 0" />
        <circle cx="12" cy="16" r="1.600" fill="#1c1c1c" />
      </svg>
      <svg className="ml-[12px] mt-[24px] h-[20px] w-[25px]" viewBox="0 0 25 20" fill="none" stroke="#1c1c1c" strokeWidth="1.600">
        <path d="M1 7v6h4l6 5.500V1.500L5 7zM14 6.500q2.500 3.500 0 7M17.500 4q4.500 6 0 12M20.500 1.500q6.500 8.500 0 17" strokeLinejoin="round" />
      </svg>
      <svg className="ml-[11px] mt-[26px] h-[16px] w-[25px]" viewBox="0 0 25 16">
        <rect x="1" y="1" width="20" height="14" rx="3.500" fill="none" stroke="#1c1c1c" strokeWidth="1.700" />
        <rect x="3.500" y="3.500" width="15" height="9" rx="1" fill="#1c1c1c" />
        <path d="M22 5h1.500q1 0 1 1v4q0 1-1 1H22z" fill="#1c1c1c" />
      </svg>
      <div className="ml-[24px] mt-[10px] flex h-[48px] w-[94px] flex-col items-end text-[16.500px]">
        <T w={44} className="leading-[24px]">14:09</T>
        <T w={94} className="leading-[24px]">01-08-2023</T>
      </div>
      <div className="ml-[10px] mt-[22px] flex h-[24px] w-[24px] items-center justify-center rounded-full bg-[#0667c1] text-[15px] text-white">2</div>
    </div>
  );
}

export default function App() {
  return (
    <div className="flex h-[1080px] w-[1920px] flex-col overflow-hidden bg-[#f0f0f0] font-[Noto_Sans,Open_Sans,sans-serif] text-black">
      <header className="flex h-[34px] shrink-0 items-center bg-[linear-gradient(90deg,#f4f1f8,#f1f1f8_60%,#eff3f9)] text-[17px]">
        <div className="ml-px pt-px"><AppLogo /></div>
        <T w={360} className="ml-[4px] pt-px">Untitled [modified] – Umbrello UML Modeller</T>
        <svg className="ml-auto mr-[29px] h-[16px] w-[157px]" viewBox="0 0 157 16" fill="none" stroke="#111" strokeWidth="1.500">
          <path d="M1 8h15M141.500.800l15 14.800M156.500.800l-15 14.800" strokeWidth="1.400" />
          <rect x="70.800" y="3.800" width="10.700" height="10.700" rx="2" />
          <path d="M73.500 1.500h7.500q3.500 0 3.500 3.500v7" />
        </svg>
      </header>
      <MenuBar />
      <MainToolbar />
      <DiagramToolbar />
      <div className="flex h-[845px] shrink-0 border-t border-white">
        <div className="flex h-[844px] w-[412px] shrink-0 flex-col border-r border-white">
          <Stereotypes />
          <DockSplit />
          <TreeView />
          <DockSplit />
          <Debug />
          <DockSplit />
          <Documentation />
        </div>
        <div className="w-[6px] shrink-0" />
        <Editor />
        <div className="w-[7px] shrink-0 border-l border-white" />
        <BirdsEye />
      </div>
      <StatusBar />
      <Taskbar />
    </div>
  );
}
